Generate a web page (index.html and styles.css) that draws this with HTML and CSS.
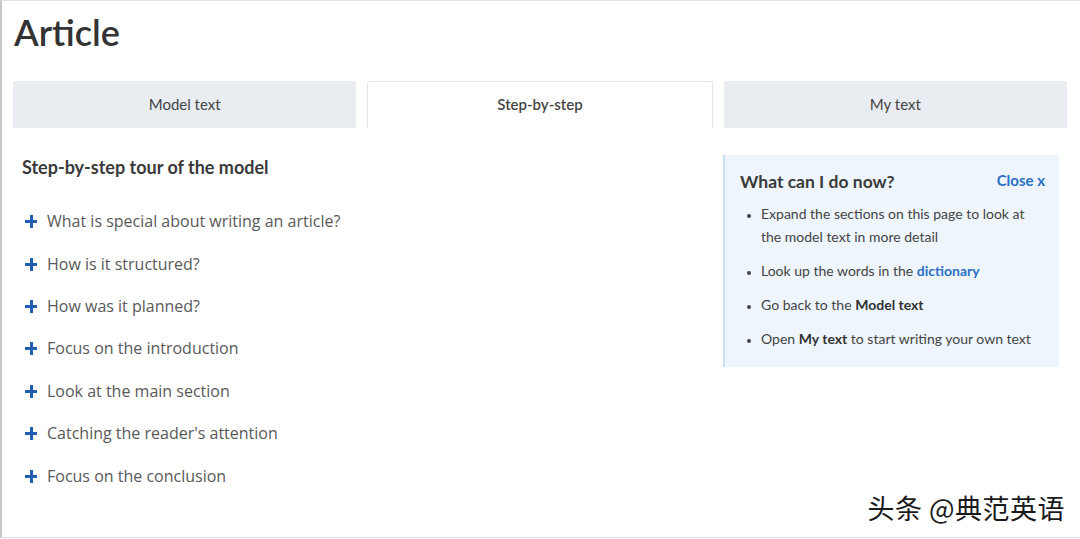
FILE: index.html
```html
<!DOCTYPE html>
<html>
<head>
<meta charset="utf-8">
<link rel="stylesheet" href="styles.css">
</head>
<body>
<div class="page">
  <h1 class="title">Article</h1>
  <div class="tabs">
    <div class="tab">Model text</div>
    <div class="tab active">Step-by-step</div>
    <div class="tab">My text</div>
  </div>
  <div class="content">
    <div class="main">
      <h2 class="tour">Step-by-step tour of the model</h2>
      <ul class="steps">
        <li><span class="plus"></span>What is special about writing an article?</li>
        <li><span class="plus"></span>How is it structured?</li>
        <li><span class="plus"></span>How was it planned?</li>
        <li><span class="plus"></span>Focus on the introduction</li>
        <li><span class="plus"></span>Look at the main section</li>
        <li><span class="plus"></span>Catching the reader's attention</li>
        <li><span class="plus"></span>Focus on the conclusion</li>
      </ul>
    </div>
    <aside class="help">
      <div class="help-head">
        <h3>What can I do now?</h3>
        <a class="close">Close x</a>
      </div>
      <ul class="help-list">
        <li>Expand the sections on this page to look at the model text in more detail</li>
        <li>Look up the words in the <a class="link">dictionary</a></li>
        <li>Go back to the <b>Model text</b></li>
        <li>Open <b>My text</b> to start writing your own text</li>
      </ul>
    </aside>
  </div>
  <div class="watermark">头条 @典范英语</div>
</div>
</body>
</html>
```
FILE: styles.css
```css
* { box-sizing: border-box; }
html, body { margin: 0; padding: 0; background: #fff; }
body { width: 1080px; height: 539px; overflow: hidden; }
.page {
  position: relative;
  width: 1080px;
  height: 538px;
  border-left: 2px solid #c8c8c8;
  border-top: 1px solid #e2e2e2;
  border-bottom: 1px solid #e2e2e2;
  padding: 0 13px 0 11px;
  font-family: "Source Sans Pro", Lato, "Noto Sans", sans-serif;
}
.title {
  margin: 0;
  padding: 9px 0 0 1px;
  height: 80px;
  font-size: 36px;
  font-weight: 600;
  color: #333;
  line-height: 44px;
}
.tabs {
  display: flex;
  gap: 11px;
  height: 47px;
}
.tab {
  flex: 1;
  background: #e9edf2;
  border-radius: 2px 2px 0 0;
  display: flex;
  align-items: center;
  justify-content: center;
  font-size: 15px;
  color: #444;
  padding-bottom: 2px;
}
.tab.active {
  background: #fff;
  border: 1px solid #e2e4e7;
  border-bottom: none;
  font-weight: 600;
}
.content {
  display: flex;
  justify-content: space-between;
  padding-top: 27px;
}
.main { padding-left: 9px; }
.tour {
  margin: 0;
  font-size: 18px;
  font-weight: 700;
  color: #3a3a3a;
  line-height: 24px;
}
.steps {
  list-style: none;
  margin: 21px 0 0 0;
  padding: 0 0 0 3px;
  font-family: "Open Sans", "Noto Sans", sans-serif;
  font-size: 16px;
  color: #595959;
}
.steps li {
  display: flex;
  align-items: center;
  height: 42.4px;
  line-height: 20px;
}
.plus {
  position: relative;
  width: 12px;
  height: 12px;
  margin-right: 10px;
  flex: none;
}
.plus::before, .plus::after {
  content: "";
  position: absolute;
  background: #1f5fae;
}
.plus::before { left: 0; top: 5px; width: 12px; height: 3px; }
.plus::after { left: 4.5px; top: 0; width: 3px; height: 13px; }
.help {
  width: 336px;
  height: 212px;
  margin-right: 8px;
  background: #eef5fc;
  border-left: 2px solid #c7dff3;
  padding: 15px 14px 0 15px;
}
.help-head {
  display: flex;
  justify-content: space-between;
  align-items: center;
}
.help-head h3 {
  margin: 0;
  font-size: 17.5px;
  font-weight: 700;
  color: #3a3a3a;
  line-height: 24px;
}
.close {
  color: #2b70c5;
  font-weight: 700;
  font-size: 15px;
  margin-top: -4px;
}
.help-list {
  margin: 8px 0 0 0;
  padding: 0 0 0 21px;
  font-size: 14px;
  color: #444;
  line-height: 23px;
}
.help-list li { margin-bottom: 11px; }
.help-list li::marker { font-size: 11px; }
.help-list b { color: #333; font-weight: 700; }
.link { color: #2b70c5; font-weight: 700; }
.watermark {
  position: absolute;
  right: 15px;
  bottom: 10px;
  font-family: "Noto Sans CJK SC", sans-serif;
  font-size: 27px;
  color: #1a1a1a;
  letter-spacing: 0.5px;
}
```
